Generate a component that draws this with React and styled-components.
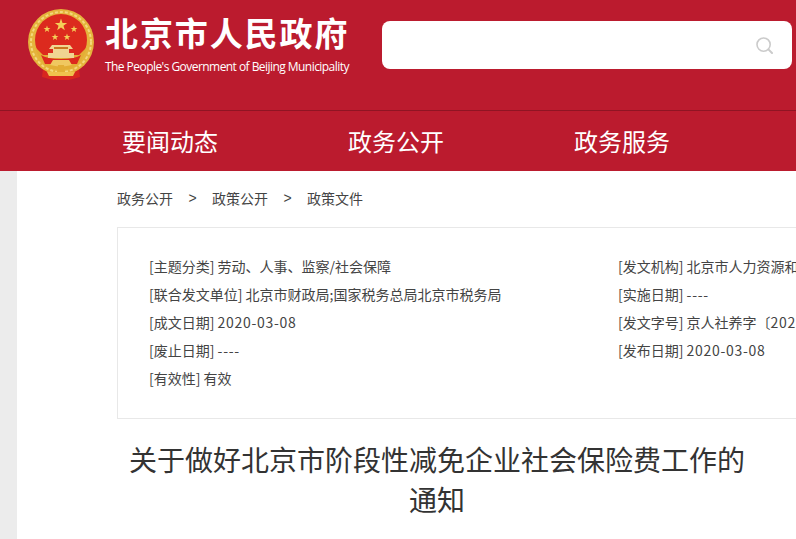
import styled, { createGlobalStyle } from "styled-components";

const GlobalStyle = createGlobalStyle`
html, body {
  margin: 0;
  padding: 0;
  background: #ececec;
  overflow: hidden;
}
body {
  font-family: "Noto Sans CJK SC", "Noto Sans", sans-serif;
}
`;

const Page = styled.div`
  width: 796px;
  height: 539px;
  overflow: hidden;
`;

const Header = styled.header`
  height: 110px;
  background: #bb1b2e;
  border-bottom: 1px solid #8f1423;
  display: flex;
  align-items: flex-start;
`;

const Logo = styled.div`
  display: flex;
  margin-left: 27px;
  padding-top: 9px;
  width: 355px;
  flex: none;
`;

const LogoText = styled.div`
  margin-left: 10px;
  color: #fff;
`;

const LogoName = styled.div`
  font-size: 33px;
  font-weight: 700;
  line-height: 50px;
  margin-top: -2px;
  letter-spacing: 1.9px;
  white-space: nowrap;
`;

const LogoEnglish = styled.div`
  font-family: "Open Sans", sans-serif;
  font-size: 12px;
  line-height: 16px;
  margin-top: 2px;
  letter-spacing: -0.55px;
  white-space: nowrap;
`;

const Search = styled.div`
  margin-top: 21px;
  width: 410px;
  height: 48px;
  background: #fff;
  border-radius: 8px;
  display: flex;
  align-items: center;
  justify-content: flex-end;
  padding-right: 19px;
  box-sizing: border-box;
`;

const Nav = styled.nav`
  height: 60px;
  background: #bb1b2e;
  display: flex;
  padding-left: 122px;
  gap: 130px;
`;

const NavItem = styled.a`
  color: #fff;
  font-size: 24px;
  line-height: 59px;
  white-space: nowrap;
`;

const Main = styled.main`
  margin-left: 17px;
  height: 368px;
  background: #fff;
  padding-left: 100px;
  overflow: hidden;
`;

const Crumbs = styled.div`
  height: 54px;
  padding-bottom: 2px;
  display: flex;
  align-items: center;
  font-size: 14px;
  color: #444;
`;

const Crumb = styled.a`
  white-space: nowrap;
`;

const CrumbSep = styled.span`
  width: 39px;
  text-align: center;
  font-family: "Liberation Sans", sans-serif;
`;

const InfoCard = styled.div`
  width: 1000px;
  height: 192px;
  box-sizing: border-box;
  border: 1px solid #e8e8e8;
  padding: 24px 0 0 31px;
  display: grid;
  grid-template-columns: 469px 469px;
  grid-auto-rows: 28px;
  font-size: 14px;
  color: #444;
`;

const InfoItem = styled.div`
  line-height: 28px;
  white-space: nowrap;
`;

const Digits = styled.span`
  letter-spacing: 0.7px;
`;

const Title = styled.h1`
  width: 640px;
  margin: 20px 0 0;
  font-size: 28px;
  font-weight: 400;
  line-height: 40px;
  text-align: center;
  color: #333;
`;

const STAR = "M0 -10 L2.35 -3.1 L9.5 -3.1 L3.8 1.2 L5.9 8.1 L0 3.9 L-5.9 8.1 L-3.8 1.2 L-9.5 -3.1 L-2.35 -3.1 Z";

function Emblem() {
  return (
    <svg width="68" height="71" viewBox="0 0 68 71">
      <path d="M17 52 L15 68 L26 71 L42 71 L53 68 L51 52 Z" fill="#d8261f" />
      <circle cx="34" cy="33" r="33" fill="#e5b43c" />
      <circle cx="34" cy="33" r="30" fill="none" stroke="#f4d87c" strokeWidth="2" strokeDasharray="3 2" />
      <circle cx="34" cy="31" r="26" fill="#dc2a1e" />
      <path d="M8 38 Q12 54 24 60 L44 60 Q56 54 60 38 L52 46 L16 46 Z" fill="#e3ae35" />
      <path d="M14 46 Q20 50 34 50 Q48 50 54 46 L50 55 L18 55 Z" fill="#dc2a1e" />
      <g fill="#f4cf58">
        <path transform="translate(34 16) scale(.65)" d={STAR} />
        <path transform="translate(20 20) scale(.36)" d={STAR} />
        <path transform="translate(47 20) scale(.36)" d={STAR} />
        <path transform="translate(28 28) scale(.36)" d={STAR} />
        <path transform="translate(40 28) scale(.36)" d={STAR} />
      </g>
      <path d="M25 36 H43 L46 40 H42 V44 H47 V49 H21 V44 H26 V40 H22 Z" fill="#f0d592" />
      <path d="M27 38 H41 V40 H27 Z" fill="#c9761f" />
      <path d="M26 51 H42 L45 56 L34 58 L23 56 Z" fill="#f0c860" />
      <path d="M20 63 H48 L46 67 H22 Z" fill="#f0c14d" />
      <path d="M31 56 H37 L38 63 H30 Z" fill="#e3ae35" />
    </svg>
  );
}

function SearchIcon() {
  return (
    <svg width="17" height="17" viewBox="0 0 17 17" fill="none" stroke="#cbcbcb" strokeWidth="1.6">
      <circle cx="7.6" cy="7.6" r="6.6" />
      <path d="M12.4 12.4 L16 16" strokeLinecap="round" strokeWidth="2" />
    </svg>
  );
}

const navItems = ["要闻动态", "政务公开", "政务服务"];
const crumbs = ["政务公开", "政策公开", "政策文件"];
const infoItems = [
  "[主题分类] 劳动、人事、监察/社会保障",
  "[发文机构] 北京市人力资源和社会保障局",
  "[联合发文单位] 北京市财政局;国家税务总局北京市税务局",
  "[实施日期] ----",
  "[成文日期] 2020-03-08",
  "[发文字号] 京人社养字〔2020〕40号",
  "[废止日期] ----",
  "[发布日期] 2020-03-08",
  "[有效性] 有效",
];

// digit runs sit wider in the original font
function withDigits(text) {
  return text.split(/([\d-]+)/).map((part, i) =>
    i % 2 ? <Digits key={i}>{part}</Digits> : part
  );
}

export default function App() {
  return (
    <Page>
      <GlobalStyle />
      <Header>
        <Logo>
          <Emblem />
          <LogoText>
            <LogoName>北京市人民政府</LogoName>
            <LogoEnglish>The People's Government of Beijing Municipality</LogoEnglish>
          </LogoText>
        </Logo>
        <Search>
          <SearchIcon />
        </Search>
      </Header>
      <Nav>
        {navItems.map((item) => (
          <NavItem key={item}>{item}</NavItem>
        ))}
      </Nav>
      <Main>
        <Crumbs>
          {crumbs.map((item, i) => (
            <>
              {i > 0 && <CrumbSep>&gt;</CrumbSep>}
              <Crumb>{item}</Crumb>
            </>
          ))}
        </Crumbs>
        <InfoCard>
          {infoItems.map((item) => (
            <InfoItem key={item}>{withDigits(item)}</InfoItem>
          ))}
        </InfoCard>
        <Title>关于做好北京市阶段性减免企业社会保险费工作的通知</Title>
      </Main>
    </Page>
  );
}
